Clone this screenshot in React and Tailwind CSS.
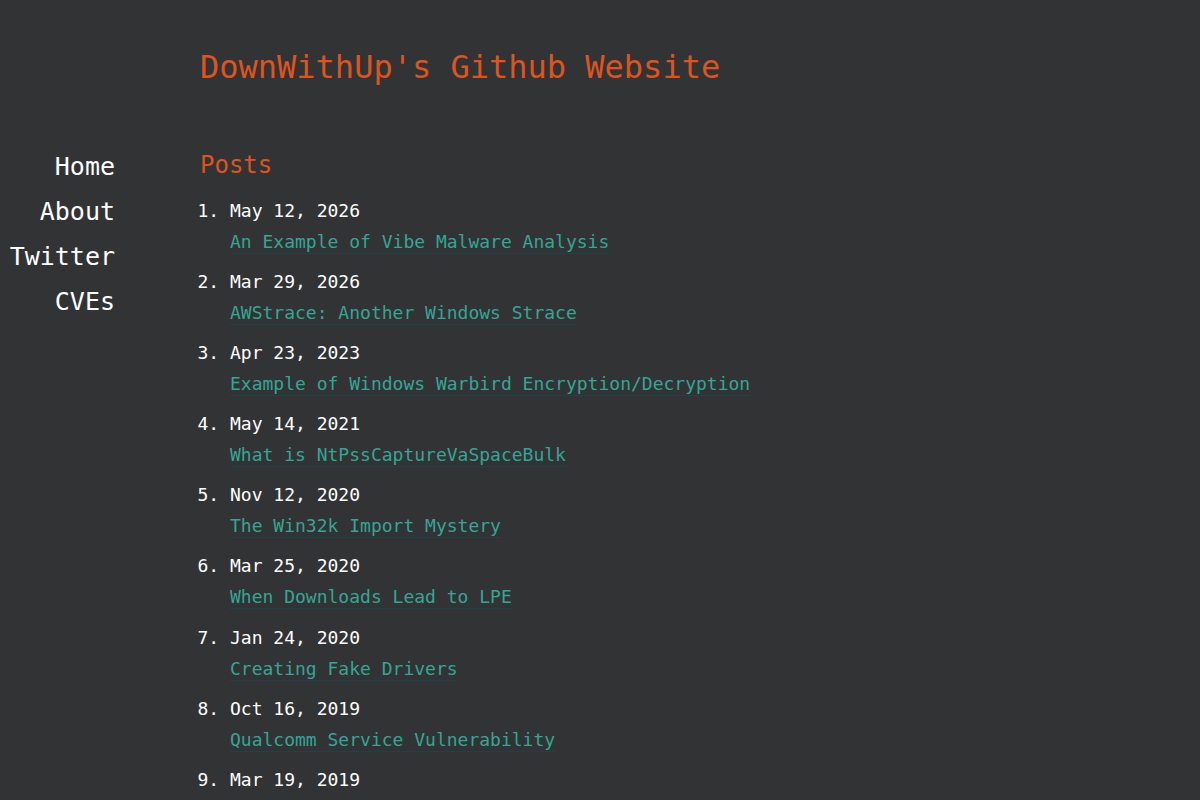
const posts = [
  { date: "May 12, 2026", title: "An Example of Vibe Malware Analysis" },
  { date: "Mar 29, 2026", title: "AWStrace: Another Windows Strace" },
  { date: "Apr 23, 2023", title: "Example of Windows Warbird Encryption/Decryption" },
  { date: "May 14, 2021", title: "What is NtPssCaptureVaSpaceBulk" },
  { date: "Nov 12, 2020", title: "The Win32k Import Mystery" },
  { date: "Mar 25, 2020", title: "When Downloads Lead to LPE" },
  { date: "Jan 24, 2020", title: "Creating Fake Drivers" },
  { date: "Oct 16, 2019", title: "Qualcomm Service Vulnerability" },
  { date: "Mar 19, 2019", title: "Windows Service Exploitation" },
];

const nav = ["Home", "About", "Twitter", "CVEs"];

export default function App() {
  return (
    <div className="min-h-screen bg-[#323335] text-[#f2f2f2] font-['DejaVu_Sans_Mono',monospace]">
      {/* Header */}
      <header className="pt-[48px] pl-[200px]">
        <h1 className="text-[32px] leading-[38px] text-[#dd5420]">
          DownWithUp's Github Website
        </h1>
      </header>

      <div className="flex mt-[58px]">
        {/* Sidebar nav */}
        <nav className="w-[115px] flex-shrink-0 text-right text-[25px] leading-[45px]">
          {nav.map((item) => (
            <a key={item} href="#" className="block text-white">
              {item}
            </a>
          ))}
        </nav>

        {/* Posts */}
        <main className="pl-[85px] pt-[1px]">
          <h2 className="text-[24px] leading-[40px] text-[#dd5420] mb-[9.5px]">Posts</h2>
          <ol className="list-decimal list-outside pl-[30px] text-[18px] leading-[31px]">
            {posts.map((p) => (
              <li key={p.date} className="mb-[9.2px] text-white">
                <div>{p.date}</div>
                <a
                  href="#"
                  className="text-[#35a596] underline decoration-[#21404c] underline-offset-[5px]"
                >
                  {p.title}
                </a>
              </li>
            ))}
          </ol>
        </main>
      </div>
    </div>
  );
}
